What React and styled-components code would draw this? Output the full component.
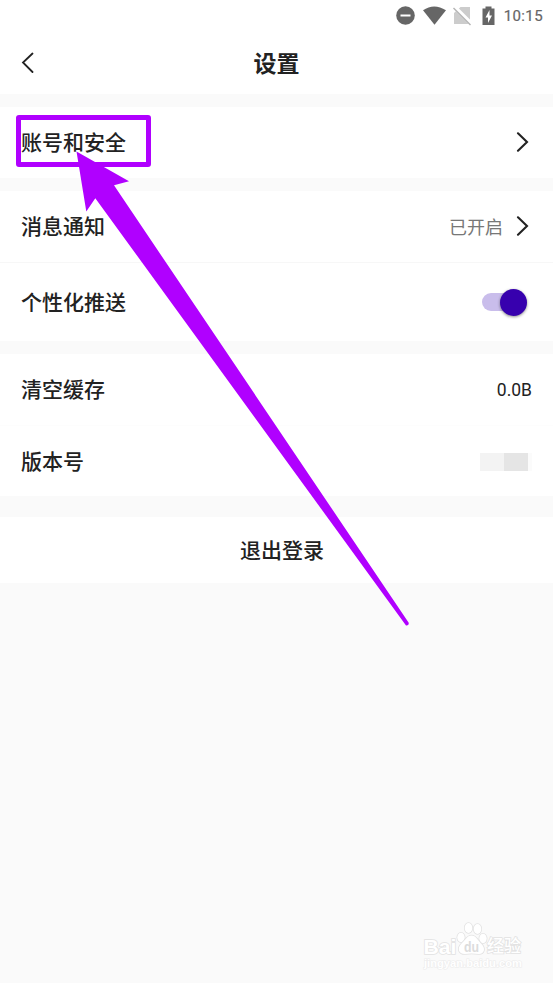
import React from 'react'
import styled, { createGlobalStyle } from 'styled-components'

const ink = '#222222'
const surface = '#ffffff'
const canvas = '#fafafa'
const statusGrey = '#666666'
const marker = '#b000ff'
const primary = '#3700ae'

const GlobalStyle = createGlobalStyle`
  body {
    margin: 0;
    background: ${canvas};
    color: ${ink};
    font-family: 'Noto Sans CJK SC', 'Noto Sans', sans-serif;
  }
`

const Screen = styled.div`
  position: relative;
  width: 553px;
  height: 983px;
  overflow: hidden;
  background: ${canvas};
`

const StatusBar = styled.div`
  display: flex;
  justify-content: flex-end;
  align-items: center;
  height: 32px;
  padding-right: 10px;
  box-sizing: border-box;
  background: ${surface};
`

const Clock = styled.span`
  margin-left: 6px;
  font-family: Roboto, sans-serif;
  font-size: 15px;
  font-weight: 400;
  line-height: 32px;
  letter-spacing: 0.4px;
  color: ${statusGrey};
  -webkit-text-stroke: 0.2px ${statusGrey};
`

const Header = styled.header`
  display: grid;
  grid-template-columns: 60px 1fr 60px;
  align-items: center;
  height: 62px;
  padding-bottom: 2px;
  box-sizing: border-box;
  background: ${surface};
`

const BackButton = styled.button`
  display: flex;
  width: 60px;
  padding: 0 0 0 21px;
  border: none;
  background: none;
`

const Title = styled.h1`
  margin: 0;
  font-size: 23px;
  font-weight: 700;
  line-height: 60px;
  text-align: center;
`

const Group = styled.section`
  margin-top: ${(props) => props.$gap || '13px'};
  background: ${surface};
`

const Row = styled.div`
  display: flex;
  align-items: center;
  justify-content: ${(props) => (props.$center ? 'center' : 'space-between')};
  height: ${(props) => props.$height || '71px'};
  padding: ${(props) => (props.$center ? '0 21px 0 32px' : '0 21px')};
  box-sizing: border-box;
  border-top: ${(props) => (props.$line ? `1px solid ${props.$line}` : 'none')};
`

const Label = styled.span`
  padding-bottom: 3px;
  font-size: 21px;
  font-weight: 500;
  line-height: 30px;
`

const Side = styled.div`
  display: flex;
  align-items: center;
  gap: 13px;
  padding-right: ${(props) => props.$inset || '3px'};
`

const Status = styled.span`
  padding-bottom: 2px;
  font-size: 18px;
  line-height: 26px;
  color: #777777;
`

const Size = styled.span`
  padding-top: 1px;
  font-family: Roboto, sans-serif;
  font-size: 17.5px;
  line-height: 24px;
`

const Track = styled.div`
  display: flex;
  align-items: center;
  justify-content: flex-end;
  width: 43px;
  height: 18px;
  border-radius: 9px;
  background: #c9bdeb;
`

const Thumb = styled.div`
  width: 27px;
  height: 27px;
  margin-right: -2px;
  border-radius: 50%;
  background: ${primary};
  box-shadow: 0 1px 3px rgba(0, 0, 0, 0.45);
`

const Mosaic = styled.div`
  display: flex;
  height: 18px;
  padding-top: 1px;
`

const Tile = styled.div`
  width: ${(props) => props.$width};
  background: ${(props) => props.$tone};
`

const Highlight = styled.div`
  position: absolute;
  left: 16px;
  top: 115px;
  width: 135px;
  height: 52px;
  box-sizing: border-box;
  border: 5px solid ${marker};
  border-radius: 3px;
`

const ArrowLayer = styled.svg`
  position: absolute;
  left: 0;
  top: 0;
  pointer-events: none;
`

const Watermark = styled.svg`
  position: absolute;
  left: 418px;
  top: 918px;
`

const StatusIcons = () => (
  <svg width="102" height="32" viewBox="0 0 102 32">
    <circle cx="9.5" cy="15.5" r="9.3" fill={statusGrey} />
    <rect x="4.5" y="14.5" width="10" height="2" fill={surface} />
    <path d="M27 10.3Q38 2.6 50 10.3L38.5 24.7Z" fill={statusGrey} />
    <path d="M64.5 7H74V24H58V13Z" fill="#cccccc" />
    <path d="M58.5 7L75 23.5" stroke={surface} strokeWidth="4" />
    <path d="M57.5 8L74.5 25" stroke="#b4b4b4" strokeWidth="1.5" />
    <path d="M89.5 6.5H95.5V8.5H98.5V25H86.5V8.5H89.5Z" fill={statusGrey} />
    <path d="M93.5 10L89.5 17.5H92V23L96 15.5H93.5Z" fill={surface} />
  </svg>
)

const ChevronLeft = () => (
  <svg width="13" height="21" viewBox="0 0 13 21">
    <path
      d="M11.5 1.5L2 10.5L11.5 20"
      fill="none"
      stroke={ink}
      strokeWidth="1.8"
      strokeLinecap="round"
    />
  </svg>
)

const ChevronRight = () => (
  <svg width="13" height="21" viewBox="0 0 13 21">
    <path
      d="M2 1.3L11 10L2 18.7"
      fill="none"
      stroke={ink}
      strokeWidth="2.1"
      strokeLinecap="round"
    />
  </svg>
)

const Arrow = () => (
  <ArrowLayer width="553" height="983" viewBox="0 0 553 983">
    <path
      d="M76.5 151.5L129 181.3L114 185.3L408.7 622.8Q409.2 625.8 406 625.5L95.3 198.2L86.3 211.5Z"
      fill={marker}
    />
  </ArrowLayer>
)

const BaiduMark = () => (
  <Watermark width="120" height="60" viewBox="0 0 120 60">
    <g
      fill="#ffffff"
      stroke="#e2e2e2"
      strokeWidth="1.6"
      paintOrder="stroke"
      fontFamily="'Liberation Sans', sans-serif"
      fontWeight="700"
    >
      <text
        x="5.5"
        y="35.5"
        fontSize="21"
        textLength="33"
        lengthAdjust="spacingAndGlyphs"
      >
        Bai
      </text>
      <ellipse cx="43" cy="19.5" rx="3.7" ry="4.7" />
      <ellipse cx="50.5" cy="10" rx="3.8" ry="5" />
      <ellipse cx="59.5" cy="11" rx="3.8" ry="5" />
      <ellipse cx="65" cy="20.5" rx="3.7" ry="4.7" />
      <path d="M53.5 17.5C58 17.5 60 22.5 63 25.5C68 30 66.5 36 61 36Q53 35 47 36C40 36 39 30 43.5 25.5C47 22.5 49 17.5 53.5 17.5Z" />
      <text
        x="46"
        y="33.5"
        fontSize="14"
        fill="#dcdcdc"
        stroke="none"
        textLength="15"
        lengthAdjust="spacingAndGlyphs"
      >
        du
      </text>
      <text
        x="69"
        y="34"
        fontSize="17"
        fontWeight="500"
        fontFamily="'Noto Sans CJK SC', sans-serif"
      >
        经验
      </text>
      <text
        x="6"
        y="49"
        fontSize="11"
        strokeWidth="1.2"
        stroke="#ececec"
        textLength="98"
        lengthAdjust="spacingAndGlyphs"
      >
        jingyan.baidu.com
      </text>
    </g>
  </Watermark>
)

const App = () => (
  <Screen>
    <GlobalStyle />
    <StatusBar>
      <StatusIcons />
      <Clock>10:15</Clock>
    </StatusBar>
    <Header>
      <BackButton aria-label="返回">
        <ChevronLeft />
      </BackButton>
      <Title>设置</Title>
    </Header>

    <Group>
      <Row>
        <Label>账号和安全</Label>
        <Side>
          <ChevronRight />
        </Side>
      </Row>
    </Group>

    <Group>
      <Row>
        <Label>消息通知</Label>
        <Side>
          <Status>已开启</Status>
          <ChevronRight />
        </Side>
      </Row>
      <Row $height="79px" $line="#f7f7f7">
        <Label>个性化推送</Label>
        <Side $inset="7px">
          <Track>
            <Thumb />
          </Track>
        </Side>
      </Row>
    </Group>

    <Group>
      <Row>
        <Label>清空缓存</Label>
        <Size>0.0B</Size>
      </Row>
      <Row $line="#fdfdfd">
        <Label>版本号</Label>
        <Side $inset="0px">
          <Mosaic>
            <Tile $width="24px" $tone="#f3f3f3" />
            <Tile $width="24px" $tone="#e5e5e5" />
            <Tile $width="4px" $tone="#fbfbfb" />
          </Mosaic>
        </Side>
      </Row>
    </Group>

    <Group $gap="21px">
      <Row $center $height="66px">
        <Label>退出登录</Label>
      </Row>
    </Group>

    <Highlight />
    <Arrow />
    <BaiduMark />
  </Screen>
)

export default App
